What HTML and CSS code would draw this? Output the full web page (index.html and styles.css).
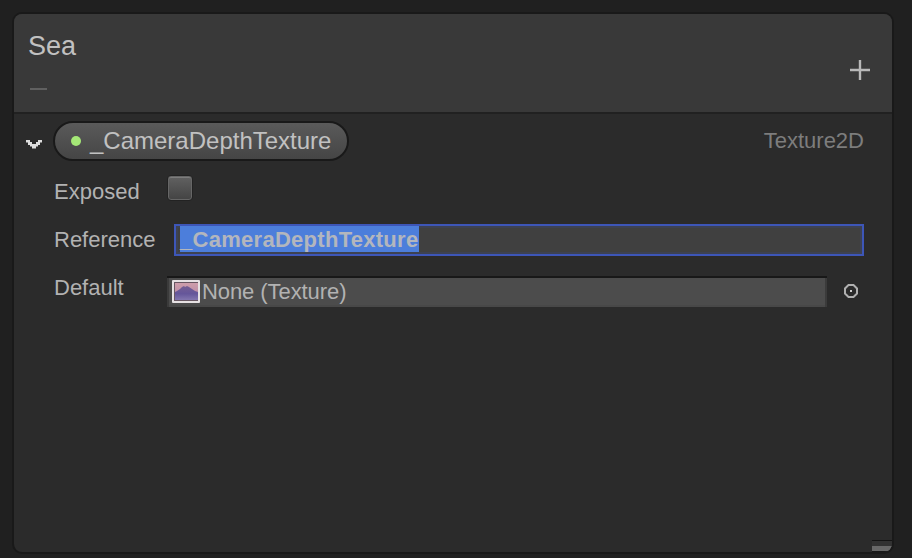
FILE: index.html
```html
<!DOCTYPE html>
<html lang="en">
<head>
<meta charset="utf-8">
<title>Sea</title>
<link rel="stylesheet" href="styles.css">
</head>
<body>
<main class="panel">
  <header class="header">
    <div>
      <h1 class="title">Sea</h1>
      <div class="subtitle"></div>
    </div>
    <svg class="add" width="20" height="20" viewBox="0 0 20 20"><path d="M10 0V20M0 10H20" stroke="#b8b8b8" stroke-width="2.4"/></svg>
  </header>
  <section class="property">
    <svg class="chevron" width="16" height="9" viewBox="0 0 16 9"><path d="M0 0H4V2H6V4H10V2H12V0H16V2.5H14V5H12V6.5H10V8.5H6V6.5H4V5H2V2.5H0Z" fill="#dedede"/></svg>
    <div class="pill"><span class="dot"></span><span class="name">_CameraDepthTexture</span></div>
    <span class="type">Texture2D</span>
  </section>
  <section class="fields">
    <div class="row"><label class="label">Exposed</label><span class="checkbox"></span></div>
    <div class="row"><label class="label">Reference</label><div class="input"><span class="selection">_CameraDepthTexture</span></div></div>
    <div class="row"><label class="label">Default</label>
      <div class="object">
        <svg class="thumb" width="28" height="23" viewBox="0 0 28 23">
          <defs>
            <linearGradient id="sky" x2="0" y2="1"><stop offset="0" stop-color="#ce9eab"/><stop offset="1" stop-color="#b083a5"/></linearGradient>
            <linearGradient id="hill" x2="0" y2="1"><stop offset="0" stop-color="#755e94"/><stop offset=".55" stop-color="#65569a"/><stop offset="1" stop-color="#8276af"/></linearGradient>
          </defs>
          <rect width="28" height="23" rx="1" fill="#e6e1e3"/>
          <rect x="2" y="2" width="24" height="19" fill="#675662"/>
          <rect x="3" y="3" width="23" height="17" fill="url(#sky)"/>
          <path d="M3 12L5 11L8 9L10 7L12 6L13 7L15 6L17 7L20 9L23 11L26 12V20H3Z" fill="url(#hill)"/>
        </svg>
        <span class="none">None (Texture)</span>
      </div>
      <svg class="picker" width="14" height="14" viewBox="0 0 14 14"><path d="M4.5 1H9.5L13 4.5V9.5L9.5 13H4.5L1 9.5V4.5Z" fill="none" stroke="#b0b0b0" stroke-width="2"/><rect x="6" y="6" width="2" height="2" fill="#d0d0d0"/></svg>
    </div>
  </section>
  <svg class="resizer" width="20" height="12" viewBox="0 0 20 12" shape-rendering="crispEdges"><path d="M0 0H20V1H0Z" fill="#141414"/><path d="M0 1H20V6H0Z" fill="#323232"/><path d="M0 6H20V7H19V9H18V10H17V11H0Z" fill="#686868"/><path d="M0 11H16V12H0Z" fill="#171717"/></svg>
</main>
</body>
</html>
```
FILE: styles.css
```css
* { box-sizing: border-box; }
body {
  margin: 0;
  height: 558px;
  padding: 12px 18px 4px 12px;
  background: #202020;
  font-family: "Liberation Sans", Arial, sans-serif;
  font-size: 22px;
  line-height: 26px;
  color: #b2b2b2;
  overflow: hidden;
}
svg { display: block; flex: none; }
.panel {
  position: relative;
  height: 542px;
  border: 2px solid #191919;
  border-radius: 10px;
  background: #2b2b2b;
  overflow: hidden;
}
.header {
  display: flex;
  justify-content: space-between;
  align-items: flex-start;
  height: 100px;
  padding: 16px 22px 0 14px;
  background: #393939;
  border-bottom: 2px solid #212121;
}
.title { margin: 0; font-size: 27px; font-weight: 400; line-height: 32px; color: #c1c1c1; }
.subtitle { width: 17px; height: 2px; margin: 26px 0 0 2px; background: #606060; }
.add { margin-top: 30px; }
.property {
  display: flex;
  align-items: flex-start;
  height: 56px;
  padding: 7px 28px 0 12px;
}
.chevron { margin: 19px 11px 0 0; }
.pill {
  display: flex;
  align-items: center;
  width: 296px;
  height: 40px;
  padding-left: 16px;
  border: 2px solid #191919;
  border-radius: 20px;
  background: linear-gradient(#5a5a5a, #454545);
}
.dot { width: 10px; height: 10px; margin-right: 9px; border-radius: 50%; background: #a5e877; }
.name { font-size: 24px; color: #c1c1c1; }
.type { margin: 7px 0 0 auto; color: #7d7d7d; }
.fields { padding-left: 40px; }
.row { display: flex; align-items: flex-start; height: 48px; }
.label { flex: none; width: 113px; padding-top: 9px; }
.checkbox {
  width: 26px;
  height: 26px;
  margin-top: 5px;
  border: 1px solid #222;
  border-radius: 4px;
  background: linear-gradient(#626262, #434343);
  box-shadow: inset 0 0 0 1px #666, inset 0 2px 0 #7c7c7c;
}
.input {
  width: 690px;
  height: 32px;
  margin: 6px 0 0 7px;
  padding: 0 0 2px 4px;
  border: 2px solid #3d56b8;
  background: #404040;
  box-shadow: inset 0 0 0 2px #3d4252;
}
.selection {
  display: block;
  width: 239px;
  height: 26px;
  background: #4c7edb;
  color: #b3b6bd;
  font-weight: 700;
  letter-spacing: .28px;
  white-space: nowrap;
  line-height: 27px;
}
.object {
  display: flex;
  align-items: flex-start;
  width: 660px;
  height: 31px;
  margin-top: 10px;
  padding: 2px 0 0 5px;
  border-top: 2px solid #181818;
  background: #4c4c4c;
  box-shadow: inset 2px 0 0 #3b3b3b, inset -2px 0 0 #3b3b3b, inset 0 -2px 0 #484848;
}
.none { margin: -1px 0 0 2px; letter-spacing: -.08px; }
.picker { margin: 18px 0 0 17px; }
.resizer { position: absolute; right: 0; bottom: 0; }
```
